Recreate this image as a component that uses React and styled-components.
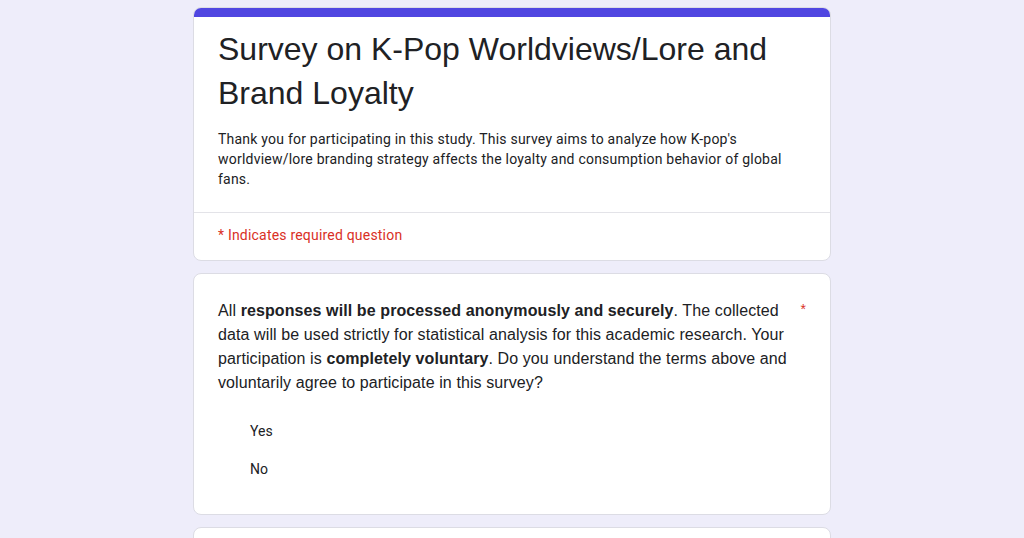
import React from "react";
import styled, { createGlobalStyle } from "styled-components";

const Global = createGlobalStyle`
  html, body { margin: 0; padding: 0; }
  body {
    background: #eeedfa;
    font-family: "Liberation Sans", Arial, sans-serif;
    color: #202124;
  }
`;

const Page = styled.main`
  display: flex;
  flex-direction: column;
  align-items: center;
  gap: 12px;
  padding: 7px 0 40px;
`;

const Card = styled.section`
  box-sizing: border-box;
  width: 638px;
  background: #fff;
  border: 1px solid #dcdce4;
  border-radius: 8px;
  overflow: hidden;
  min-height: ${(p) => p.$minHeight || "auto"};
`;

const TopBar = styled.div`
  height: 10px;
  background: #5046e1;
  margin: -1px -1px 0;
`;

const Header = styled.div`
  padding: 10px 24px 23px;
`;

const Title = styled.h1`
  margin: 0;
  font-family: "Liberation Sans", Arial, sans-serif;
  font-weight: 400;
  font-size: 32px;
  line-height: 44px;
  color: #202124;
`;

const Description = styled.p`
  margin: 14px 0 0;
  font-family: Roboto, "Noto Sans", sans-serif;
  font-size: 14px;
  line-height: 20px;
  letter-spacing: 0.22px;
  color: #202124;
`;

const Divider = styled.hr`
  margin: 0;
  border: 0;
  border-top: 1px solid #e3e3e8;
`;

const RequiredNote = styled.div`
  padding: 12px 24px 15px;
  font-family: Roboto, "Noto Sans", sans-serif;
  font-size: 14px;
  line-height: 20px;
  letter-spacing: 0.2px;
  color: #d93025;
`;

const QuestionBody = styled.div`
  padding: 25px 24px 26px;
`;

const QuestionRow = styled.div`
  display: flex;
  align-items: flex-start;
  gap: 8px;
`;

const QuestionText = styled.div`
  flex: 1;
  font-size: 16px;
  line-height: 24px;
  color: #202124;
  letter-spacing: 0.1px;

  b {
    font-weight: 700;
  }
`;

const Asterisk = styled.span`
  width: 9px;
  text-align: right;
  color: #d93025;
  font-size: 14px;
  line-height: 20px;
`;

const Options = styled.div`
  display: flex;
  flex-direction: column;
  margin-top: 17px;
  padding-left: 32px;
`;

const Option = styled.label`
  display: flex;
  align-items: center;
  height: 38px;
  font-family: Roboto, "Noto Sans", sans-serif;
  font-size: 14px;
  color: #202124;
`;

export default function App() {
  return (
    <>
      <Global />
      <Page>
        <Card>
          <TopBar />
          <Header>
            <Title>Survey on K-Pop Worldviews/Lore and Brand Loyalty</Title>
            <Description>
              Thank you for participating in this study. This survey aims to
              analyze how K-pop's worldview/lore branding strategy affects the
              loyalty and consumption behavior of global fans.
            </Description>
          </Header>
          <Divider />
          <RequiredNote>* Indicates required question</RequiredNote>
        </Card>
        <Card>
          <QuestionBody>
            <QuestionRow>
              <QuestionText>
                All <b>responses will be processed anonymously and securely</b>.
                The collected data will be used strictly for statistical
                analysis for this academic research. Your participation is{" "}
                <b>completely voluntary</b>. Do you understand the terms above
                and voluntarily agree to participate in this survey?
              </QuestionText>
              <Asterisk>*</Asterisk>
            </QuestionRow>
            <Options>
              <Option>Yes</Option>
              <Option>No</Option>
            </Options>
          </QuestionBody>
        </Card>
        <Card $minHeight="200px" />
      </Page>
    </>
  );
}
